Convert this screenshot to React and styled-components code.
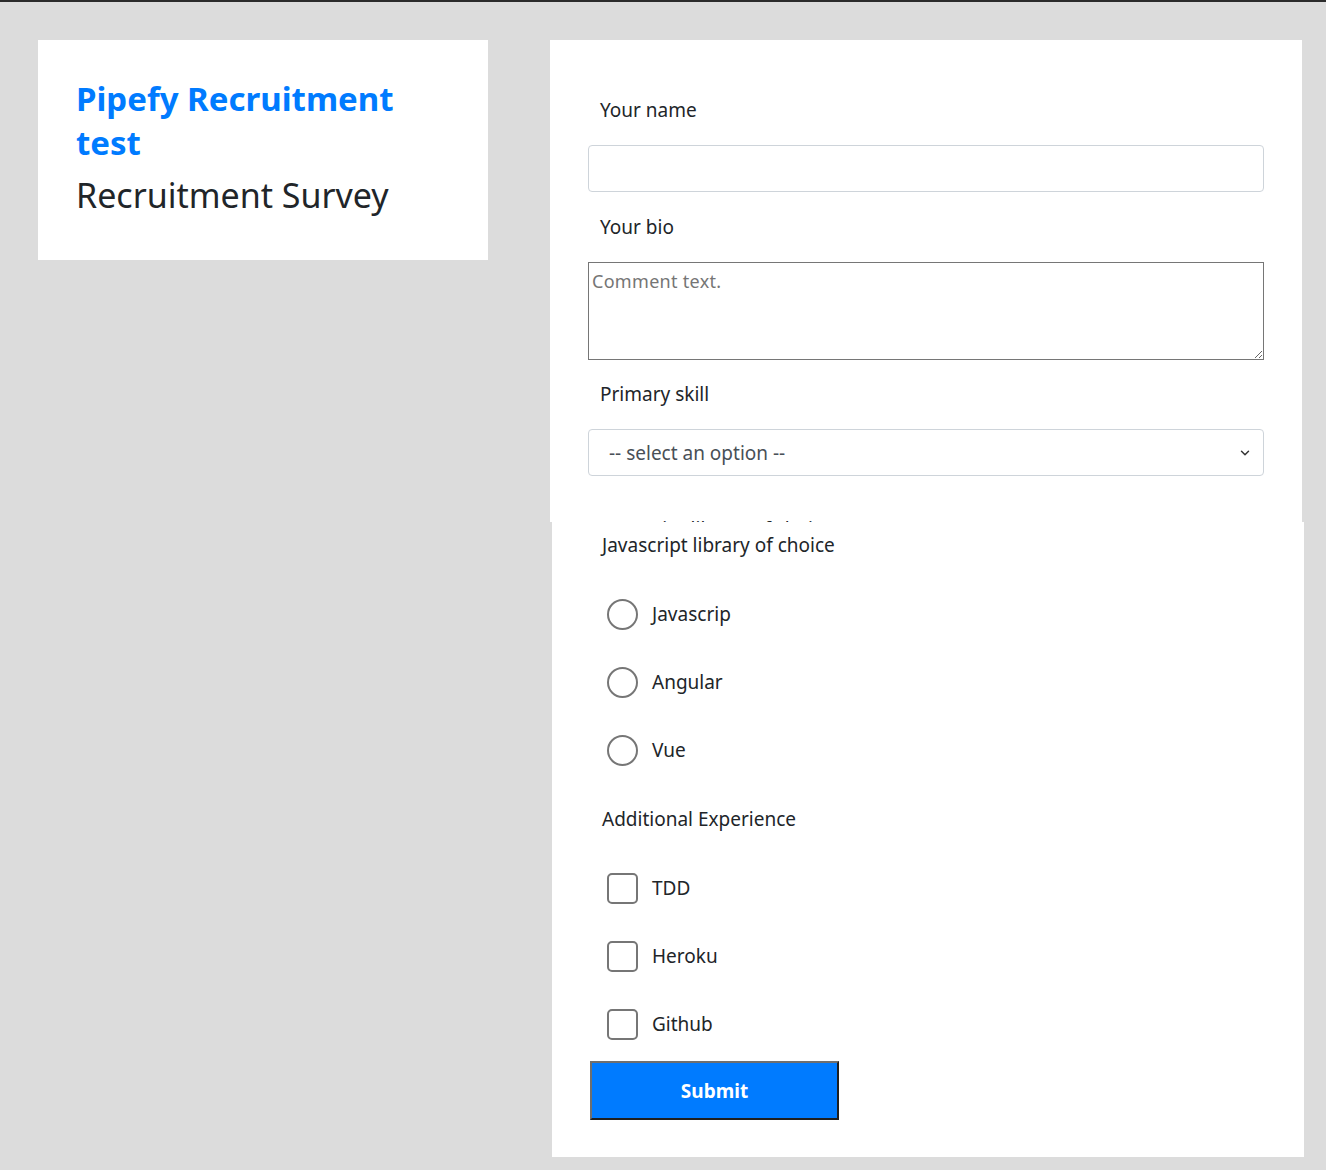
import React from 'react';
import styled, { createGlobalStyle } from 'styled-components';
import { ChevronDown } from 'lucide-react';

const GlobalStyle = createGlobalStyle`
  body {
    margin: 0;
    background: #dcdcdc;
    border-top: 2px solid #2b2b2b;
    font-family: "Noto Sans", "Open Sans", sans-serif;
    color: #212529;
  }
`;

const Page = styled.div`
  display: flex;
  align-items: flex-start;
  gap: 62px;
  padding: 38px 0 12px 38px;
`;

const IntroCard = styled.div`
  width: 450px;
  height: 220px;
  box-sizing: border-box;
  background: #fff;
  padding: 37px 38px;
`;

const Title = styled.h1`
  margin: 0;
  color: #007bff;
  font-size: 33px;
  font-weight: 700;
  line-height: 44px;
`;

const Subtitle = styled.h2`
  margin: 6px 0 0;
  font-size: 34px;
  font-weight: 400;
  line-height: 48px;
  color: #212529;
`;

const FormColumn = styled.div`
  display: flex;
  flex-direction: column;
  width: 754px;
`;

const FormTop = styled.div`
  width: 752px;
  height: 482px;
  box-sizing: border-box;
  background: #fff;
  padding: 55px 38px 0;
  overflow: hidden;
`;

const FormBottom = styled.div`
  width: 752px;
  margin-left: 2px;
  box-sizing: border-box;
  background: #fff;
  padding: 8px 38px 37px;
`;

const Label = styled.div`
  padding-left: 12px;
  font-size: 19px;
  line-height: 30px;
  margin: ${p => p.$top || 0}px 0 20px;
`;

const TextInput = styled.input`
  display: block;
  width: 100%;
  height: 47px;
  box-sizing: border-box;
  border: 1px solid #ced4da;
  border-radius: 4px;
  margin: 1px 0 20px;
  font: inherit;
`;

const TextArea = styled.textarea`
  display: block;
  width: 100%;
  height: 98px;
  box-sizing: border-box;
  border: 1px solid #767676;
  border-radius: 0;
  padding: 6px 3px;
  margin: 0 0 19px;
  font-family: "Noto Sans", sans-serif;
  font-size: 18px;
  letter-spacing: 0.3px;
  &::placeholder {
    color: #757575;
  }
`;

const SelectWrap = styled.div`
  position: relative;
  margin: 1px 0 0;
  svg {
    position: absolute;
    right: 12px;
    top: 17px;
    pointer-events: none;
    color: #333;
  }
`;

const Select = styled.select`
  display: block;
  width: 100%;
  height: 47px;
  appearance: none;
  background: #fff;
  border: 1px solid #ced4da;
  border-radius: 4px;
  padding: 0 20px;
  font-family: "Noto Sans", sans-serif;
  font-size: 19px;
  color: #495057;
`;

const OptionRow = styled.label`
  display: flex;
  align-items: center;
  gap: 14px;
  height: 68px;
  padding-left: 17px;
  font-size: 19px;
`;

const Tick = styled.input`
  appearance: none;
  margin: 0;
  width: 31px;
  height: 31px;
  border: 2px solid #767676;
  border-radius: ${p => (p.type === 'radio' ? '50%' : '5px')};
  background: #fff;
  box-sizing: border-box;
`;

const SubmitButton = styled.button`
  display: block;
  width: 249px;
  height: 59px;
  margin-top: 3px;
  background: #007bff;
  color: #fff;
  font-family: "Noto Sans", sans-serif;
  font-size: 19px;
  font-weight: 700;
  border-style: solid;
  border-width: 2px;
  border-color: #6f6f6f #1f1f1f #1f1f1f #6f6f6f;
`;

const libs = ['Javascrip', 'Angular', 'Vue'];
const extras = ['TDD', 'Heroku', 'Github'];

export default function App() {
  return (
    <>
      <GlobalStyle />
      <Page>
        <IntroCard>
          <Title>Pipefy Recruitment test</Title>
          <Subtitle>Recruitment Survey</Subtitle>
        </IntroCard>
        <FormColumn>
          <FormTop>
            <Label>Your name</Label>
            <TextInput type="text" />
            <Label>Your bio</Label>
            <TextArea placeholder="Comment text." />
            <Label>Primary skill</Label>
            <SelectWrap>
              <Select defaultValue="">
                <option value="" disabled>-- select an option --</option>
                <option>Frontend</option>
                <option>Backend</option>
              </Select>
              <ChevronDown size={14} strokeWidth={2.5} />
            </SelectWrap>
            <Label $top={38}>Javascript library of choice</Label>
          </FormTop>
          <FormBottom>
            <Label>Javascript library of choice</Label>
            {libs.map(l => (
              <OptionRow key={l}>
                <Tick type="radio" name="lib" />
                {l}
              </OptionRow>
            ))}
            <Label $top={20}>Additional Experience</Label>
            {extras.map(e => (
              <OptionRow key={e}>
                <Tick type="checkbox" />
                {e}
              </OptionRow>
            ))}
            <SubmitButton>Submit</SubmitButton>
          </FormBottom>
        </FormColumn>
      </Page>
    </>
  );
}
